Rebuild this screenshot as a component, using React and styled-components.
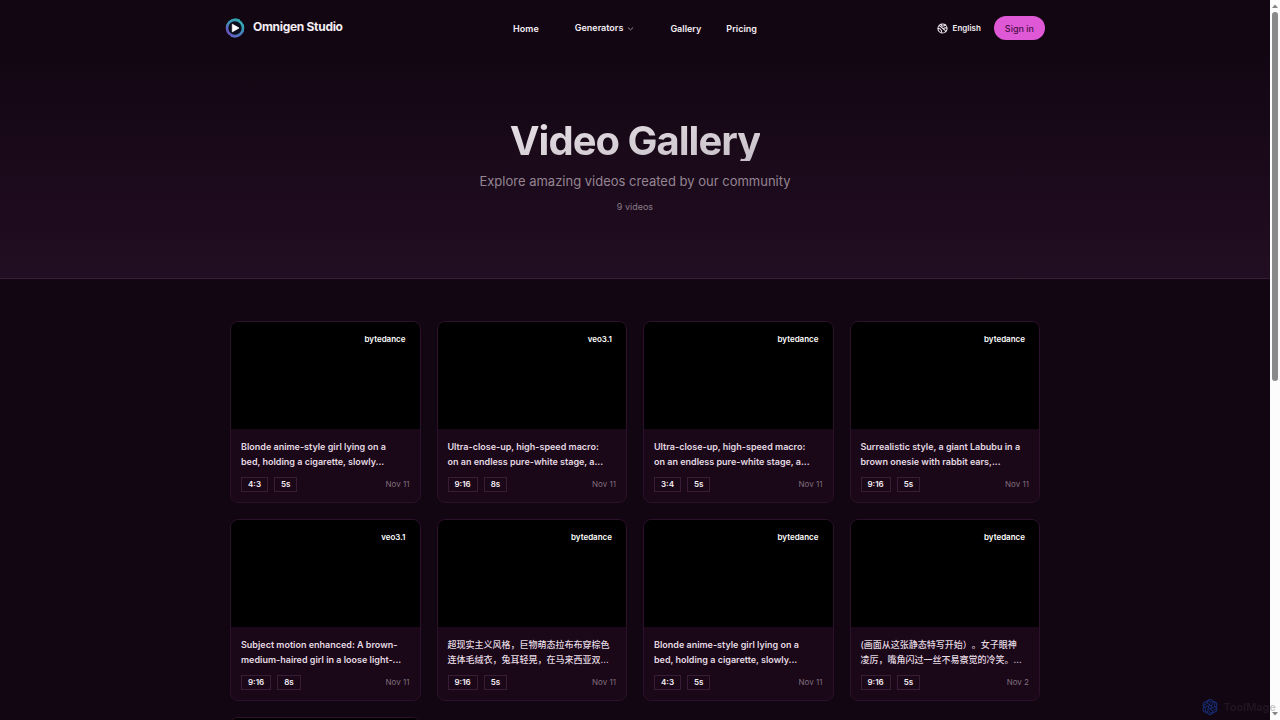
import React from "react";
import styled, { createGlobalStyle } from "styled-components";

const GlobalStyle = createGlobalStyle`
  *, *::before, *::after { box-sizing: border-box; }
  body {
    margin: 0;
    background: #130613;
    color: #f4eef4;
    font-family: Inter, "Noto Sans CJK SC", sans-serif;
    font-size: 9px;
  }
  h1, h2, p, ul { margin: 0; padding: 0; }
  ul { list-style: none; }
  a { color: inherit; text-decoration: none; }
  button { font: inherit; color: inherit; background: none; border: 0; padding: 0; cursor: pointer; }
`;

const Shell = styled.div`
  display: flex;
  height: 100vh;
  overflow: hidden;
`;

const Page = styled.div`
  flex: 1;
  min-width: 0;
  overflow: hidden;
`;

const Header = styled.header`
  display: grid;
  grid-template-columns: 1fr auto 1fr;
  align-items: center;
  width: 100%;
  max-width: 820px;
  height: 56px;
  margin: 0 auto;
`;

const Brand = styled.a`
  display: flex;
  align-items: center;
  gap: 8px;
  font-size: 12px;
  line-height: 16px;
  font-weight: 700;
  letter-spacing: -0.025em;

  span { padding-bottom: 3px; }
`;

const Nav = styled.nav`
  display: flex;
  align-items: center;
  gap: 25px;
  padding-top: 2px;
  font-size: 9px;
  line-height: 16px;
  font-weight: 600;
`;

const MenuButton = styled.button`
  display: flex;
  align-items: center;
  gap: 4px;
  padding: 0 11px 2px;
`;

const Actions = styled.div`
  display: flex;
  justify-content: flex-end;
  align-items: center;
  gap: 13px;
`;

const Language = styled.button`
  display: flex;
  align-items: center;
  gap: 5px;
  font-size: 8px;
  line-height: 12px;
  font-weight: 600;
`;

const SignIn = styled.button`
  height: 24px;
  padding: 0 11px;
  border-radius: 12px;
  background: #df58d6;
  color: #4b1047;
  font-size: 9px;
  font-weight: 500;
`;

const Hero = styled.section`
  display: flex;
  flex-direction: column;
  align-items: center;
  padding: 65px 16px 63px;
  border-bottom: 1px solid #372035;
  background: linear-gradient(#130613, #220e22);
  text-align: center;
`;

const Title = styled.h1`
  font-size: 40px;
  line-height: 40px;
  font-weight: 700;
  letter-spacing: -0.025em;
  color: transparent;
  background: linear-gradient(to bottom right, #e6e0e6, #c8c0c8);
  background-clip: text;
  -webkit-background-clip: text;
`;

const Lead = styled.p`
  margin-top: 10px;
  font-size: 13px;
  line-height: 20px;
  color: #958592;
`;

const Count = styled.p`
  margin-top: 8px;
  font-size: 9px;
  line-height: 16px;
  color: #8b7b88;
`;

const Grid = styled.ul`
  display: grid;
  grid-template-columns: repeat(4, minmax(0, 1fr));
  gap: 16px;
  width: 100%;
  max-width: 810px;
  margin: 0 auto;
  padding: 42px 0;
`;

const Card = styled.li`
  overflow: hidden;
  border: 1px solid #2b1129;
  border-radius: 8px;
  background: #1a0718;
`;

const Media = styled.div`
  display: flex;
  justify-content: flex-end;
  align-items: flex-start;
  height: 107px;
  padding: 11px 14px;
  background: #000;
`;

const Model = styled.span`
  font-size: 8px;
  line-height: 12px;
  font-weight: 600;
  color: #fff;
`;

const CardBody = styled.div`
  padding: 10px;
`;

const Prompt = styled.p`
  font-size: 9px;
  line-height: 15px;
  font-weight: 600;
  white-space: nowrap;
  text-spacing-trim: space-all;
  color: #e4dae2;

  &:lang(zh) { font-weight: 500; }
`;

const Meta = styled.div`
  display: flex;
  align-items: center;
  gap: 6px;
  margin-top: 8px;
`;

const Tag = styled.span`
  padding: 0 6px;
  border: 1px solid #391d36;
  font-size: 8px;
  line-height: 13px;
  font-weight: 600;
  color: #f7f0f6;
`;

const PostedOn = styled.time`
  margin-left: auto;
  font-size: 8px;
  line-height: 13px;
  color: #806f7d;
`;

const Rail = styled.div`
  display: flex;
  flex-direction: column;
  align-items: center;
  flex: 0 0 10px;
  padding: 4px 0;
  background: #fcfcfc;
`;

const RailTrack = styled.div`
  flex: 1;
  width: 6px;
  margin: 4px 0;
`;

const RailThumb = styled.div`
  height: 53%;
  border-radius: 3px;
  background: #8a8a8a;
`;

const Watermark = styled.div`
  position: fixed;
  right: 4px;
  bottom: 4px;
  display: flex;
  align-items: center;
  gap: 5px;
  font-size: 11px;
  line-height: 18px;
  font-weight: 600;
  color: rgba(70, 60, 75, 0.3);
`;

const LogoIcon = () => (
  <svg width="20" height="20" viewBox="0 0 20 20" aria-hidden="true">
    <defs>
      <linearGradient id="ring" x1="1" y1="0" x2="0" y2="1">
        <stop offset="0" stopColor="#2fb9b4" />
        <stop offset="0.5" stopColor="#3f83b4" />
        <stop offset="1" stopColor="#7548c4" />
      </linearGradient>
    </defs>
    <circle cx="10" cy="10" r="8" fill="#0b0c1c" stroke="url(#ring)" strokeWidth="2.6" />
    <path d="M2 6.5A9.3 9.3 0 0 1 15 2" fill="none" stroke="#35aab5" strokeWidth="1" />
    <path d="M18.5 13A9.3 9.3 0 0 1 6 18.3" fill="none" stroke="#5878d0" strokeWidth="1" />
    <path d="M7.3 6.2v7.6L14 10z" fill="#fff" stroke="#fff" strokeWidth="0.8" strokeLinejoin="round" />
  </svg>
);

const ChevronIcon = () => (
  <svg width="7" height="7" viewBox="0 0 8 8" fill="none" stroke="#b9adb8" strokeWidth="0.9" aria-hidden="true">
    <path d="M1 2.8 4 5.6 7 2.8" />
  </svg>
);

const GlobeIcon = () => (
  <svg width="11" height="11" viewBox="0 0 24 24" fill="none" stroke="#f4eef4" strokeWidth="2.2" strokeLinecap="round" strokeLinejoin="round" aria-hidden="true">
    <circle cx="12" cy="12" r="10" />
    <path d="M5 5.5 12 11l5 4.5 2 3.5" />
    <path d="M9 3.5 11 7l5-1 3-2M2.5 12l4 .5L10 17l-1 4.500M21.500 11l-5-.5-3 2" />
  </svg>
);

const KnotIcon = () => (
  <svg width="16" height="16" viewBox="0 0 24 24" fill="none" stroke="#162c70" strokeWidth="1.7" aria-hidden="true">
    {[0, 60, 120, 180, 240, 300].map((angle) => (
      <path key={angle} transform={`rotate(${angle} 12 12)`} d="M12 8.5 7.8 6V4.5A4.2 4.2 0 0 1 15.5 2.7L19 5v5" />
    ))}
    <circle cx="12" cy="12" r="2.5" />
  </svg>
);

const ArrowIcon = ({ down }) => (
  <svg width="6" height="4" viewBox="0 0 6 4" fill="#858585" aria-hidden="true">
    <path d={down ? "M0 0h6L3 3.5z" : "M0 4h6L3 .5z"} />
  </svg>
);

const videos = [
  { model: "bytedance", lines: ["Blonde anime-style girl lying on a", "bed, holding a cigarette, slowly..."], ratio: "4:3", length: "5s", date: "Nov 11" },
  { model: "veo3.1", lines: ["Ultra-close-up, high-speed macro:", "on an endless pure-white stage, a..."], ratio: "9:16", length: "8s", date: "Nov 11" },
  { model: "bytedance", lines: ["Ultra-close-up, high-speed macro:", "on an endless pure-white stage, a..."], ratio: "3:4", length: "5s", date: "Nov 11" },
  { model: "bytedance", lines: ["Surrealistic style, a giant Labubu in a", "brown onesie with rabbit ears,..."], ratio: "9:16", length: "5s", date: "Nov 11" },
  { model: "veo3.1", lines: ["Subject motion enhanced: A brown-", "medium-haired girl in a loose light-..."], ratio: "9:16", length: "8s", date: "Nov 11" },
  { model: "bytedance", lang: "zh", lines: ["超现实主义风格，巨物萌态拉布布穿棕色", "连体毛绒衣，兔耳轻晃，在马来西亚双..."], ratio: "9:16", length: "5s", date: "Nov 11" },
  { model: "bytedance", lines: ["Blonde anime-style girl lying on a", "bed, holding a cigarette, slowly..."], ratio: "4:3", length: "5s", date: "Nov 11" },
  { model: "bytedance", lang: "zh", lines: ["(画面从这张静态特写开始）。女子眼神", "凌厉，嘴角闪过一丝不易察觉的冷笑。..."], ratio: "9:16", length: "5s", date: "Nov 2" },
];

const VideoCard = ({ video }) => (
  <Card>
    <Media>
      <Model>{video.model}</Model>
    </Media>
    <CardBody>
      <Prompt lang={video.lang}>
        {video.lines[0]}
        <br />
        {video.lines[1]}
      </Prompt>
      <Meta>
        <Tag>{video.ratio}</Tag>
        <Tag>{video.length}</Tag>
        <PostedOn>{video.date}</PostedOn>
      </Meta>
    </CardBody>
  </Card>
);

export default function App() {
  return (
    <>
      <GlobalStyle />
      <Shell>
        <Page>
          <Header>
            <Brand href="#home">
              <LogoIcon />
              <span>Omnigen Studio</span>
            </Brand>
            <Nav>
              <a href="#home">Home</a>
              <MenuButton type="button">
                Generators
                <ChevronIcon />
              </MenuButton>
              <a href="#gallery">Gallery</a>
              <a href="#pricing">Pricing</a>
            </Nav>
            <Actions>
              <Language type="button">
                <GlobeIcon />
                English
              </Language>
              <SignIn type="button">Sign in</SignIn>
            </Actions>
          </Header>
          <main>
            <Hero>
              <Title>Video Gallery</Title>
              <Lead>Explore amazing videos created by our community</Lead>
              <Count>9 videos</Count>
            </Hero>
            <Grid>
              {videos.map((video, i) => (
                <VideoCard key={i} video={video} />
              ))}
              <Card>
                <Media />
              </Card>
            </Grid>
          </main>
        </Page>
        <Rail aria-hidden="true">
          <ArrowIcon />
          <RailTrack>
            <RailThumb />
          </RailTrack>
          <ArrowIcon down />
        </Rail>
      </Shell>
      <Watermark>
        <KnotIcon />
        ToolMage
      </Watermark>
    </>
  );
}
